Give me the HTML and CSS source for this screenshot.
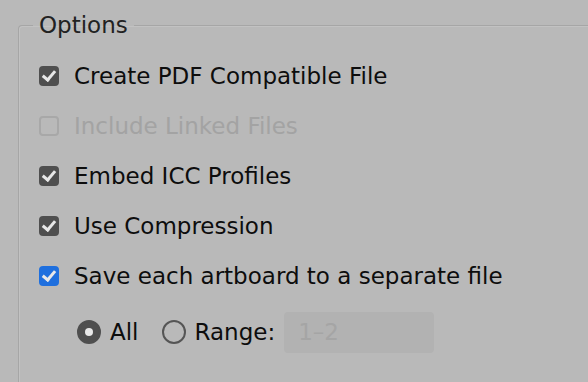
FILE: index.html
```html
<!DOCTYPE html>
<html>
<head>
    <title>Options</title>
    <link rel="stylesheet" href="styles.css">
</head>
<body>
    <fieldset class="options">
        <legend>Options</legend>

        <label class="row">
            <span class="box checked"></span>
            <span>Create PDF Compatible File</span>
        </label>

        <label class="row disabled">
            <span class="box"></span>
            <span>Include Linked Files</span>
        </label>

        <label class="row">
            <span class="box checked"></span>
            <span>Embed ICC Profiles</span>
        </label>

        <label class="row">
            <span class="box checked"></span>
            <span>Use Compression</span>
        </label>

        <label class="row">
            <span class="box checked blue"></span>
            <span>Save each artboard to a separate file</span>
        </label>

        <div class="range-row">
            <label class="radio-item">
                <span class="radio on"></span>
                <span>All</span>
            </label>
            <label class="radio-item">
                <span class="radio"></span>
                <span>Range:</span>
            </label>
            <div class="range-input">1–2</div>
        </div>
    </fieldset>
</body>
</html>
```

FILE: styles.css
```css
html, body {
    margin: 0;
    height: 100%;
}
body {
    background: #b9b9b9;
    font-family: "DejaVu Sans", Verdana, sans-serif;
    color: #0d0d0d;
    overflow: hidden;
}
.options {
    box-sizing: border-box;
    height: calc(100% - 13px);
    margin: 13px 0 0 18px;
    padding: 14px 0 0 20px;
    border: 1px solid #a6a6a6;
    border-right: none;
    border-bottom: none;
    border-top-left-radius: 4px;
    box-shadow: inset 1px 1px 0 #c2c2c2;
}
.options legend {
    font-size: 23px;
    padding: 0 6px;
    margin-left: -6px;
    color: #222;
    line-height: 24px;
}
.row {
    display: flex;
    align-items: center;
    gap: 15px;
    height: 50px;
    font-size: 23px;
}
.box {
    width: 20px;
    height: 20px;
    border-radius: 4px;
    box-sizing: border-box;
    flex: none;
    position: relative;
}
.box.checked {
    background: #4f4f4f;
}
.box.checked::after {
    content: "";
    position: absolute;
    left: 6px;
    top: 2px;
    width: 5px;
    height: 10px;
    border: solid #e8e8e8;
    border-width: 0 3px 3px 0;
    transform: rotate(40deg);
}
.box.blue {
    background: #1e6fde;
}
.disabled {
    color: #a3a3a3;
}
.disabled .box {
    border: 2px solid #a8a8a8;
}
.range-row {
    display: flex;
    align-items: center;
    height: 48px;
    margin-top: 7px;
    padding-left: 38px;
    font-size: 23px;
}
.radio-item {
    display: flex;
    align-items: center;
    gap: 9px;
    margin-right: 23px;
}
.radio-item + .radio-item {
    margin-right: 9px;
}
.radio {
    width: 24px;
    height: 24px;
    border-radius: 50%;
    box-sizing: border-box;
    border: 2px solid #555;
    flex: none;
}
.radio.on {
    background: #4f4f4f;
    border-color: #4f4f4f;
    position: relative;
}
.radio.on::after {
    content: "";
    position: absolute;
    left: 6px;
    top: 6px;
    width: 8px;
    height: 8px;
    border-radius: 50%;
    background: #e8e8e8;
}
.range-input {
    width: 136px;
    height: 41px;
    background: #b2b2b2;
    border-radius: 4px;
    color: #a5a5a5;
    line-height: 41px;
    padding-left: 14px;
}
```
